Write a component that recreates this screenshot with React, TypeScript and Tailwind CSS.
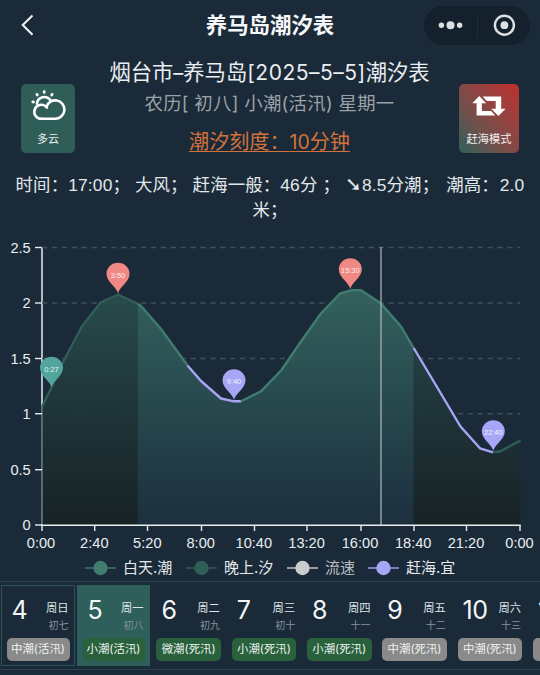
import React from "react";

type Point = [number, number];

const CURVE: Point[] = [
  [42, 407], [51.7, 387], [61.5, 365], [81.5, 327], [100.5, 302.5], [118, 294.5],
  [137.7, 303.8], [141, 306], [161, 329], [187.5, 365.5], [201, 381], [221, 398.5],
  [234, 401.3], [241, 401.3], [261, 391.3], [281.5, 370], [301, 341.5], [320.5, 314],
  [340, 293.5], [351, 290.3], [361, 290.3], [381, 303.5], [401, 326.5], [413.7, 348],
  [437, 387], [460.5, 426.5], [480, 448.3], [493, 452.3], [500, 451.5], [520.5, 440.5],
];

const line = (a: number, b: number) =>
  CURVE.slice(a, b + 1).map((p) => p.join(",")).join(" ");
const area = (a: number, b: number) =>
  `${CURVE[a][0]},525 ${line(a, b)} ${CURVE[b][0]},525`;

const Y_TICKS = [
  { label: "2.5", y: 247.5 },
  { label: "2", y: 303 },
  { label: "1.5", y: 358.5 },
  { label: "1", y: 413.7 },
  { label: "0.5", y: 469.7 },
  { label: "0", y: 525 },
];

const X_TICKS = [
  { label: "0:00", x: 42, tx: 41 },
  { label: "2:40", x: 94.7, tx: 94.3 },
  { label: "5:20", x: 147.5, tx: 147.3 },
  { label: "8:00", x: 201.5, tx: 200.7 },
  { label: "10:40", x: 254.5, tx: 253.8 },
  { label: "13:20", x: 307, tx: 306.6 },
  { label: "16:00", x: 361, tx: 360 },
  { label: "18:40", x: 414, tx: 413.2 },
  { label: "21:20", x: 466.5, tx: 466 },
  { label: "0:00", x: 520, tx: 519.5 },
];

const PINS = [
  { x: 118, y: 274.3, label: "3:50", color: "#f08984" },
  { x: 350.3, y: 269.8, label: "15:30", color: "#f08984" },
  { x: 51.5, y: 368.3, label: "0:27", color: "#52a59c" },
  { x: 234, y: 380.8, label: "9:40", color: "#a7a5f5" },
  { x: 493.3, y: 431.8, label: "22:40", color: "#a7a5f5" },
];

function TideChart() {
  return (
    <svg className="block h-[316px] w-full font-['Liberation_Sans',sans-serif]" viewBox="0 234 540 316">
      <defs>
        <linearGradient id="day" gradientUnits="userSpaceOnUse" x1="0" y1="290" x2="0" y2="525">
          <stop offset="0" stopColor="#376862" />
          <stop offset="0.5" stopColor="#284c50" />
          <stop offset="1" stopColor="#1d303f" />
        </linearGradient>
        <linearGradient id="night" gradientUnits="userSpaceOnUse" x1="0" y1="294" x2="0" y2="525">
          <stop offset="0" stopColor="#2a504e" />
          <stop offset="0.5" stopColor="#1f3639" />
          <stop offset="1" stopColor="#172122" />
        </linearGradient>
      </defs>
      <line x1="42" x2="42" y1="247" y2="525" stroke="#c4ccd2" strokeWidth="1.8" />
      {Y_TICKS.slice(0, 5).map((t) => (
        <line key={t.label} x1="42" x2="520" y1={t.y} y2={t.y} stroke="#3e5158" strokeWidth="1.4" strokeDasharray="5.3 4.6" />
      ))}
      <polygon points={area(0, 6)} fill="url(#night)" fillOpacity="0.85" />
      <polygon points={area(6, 23)} fill="url(#day)" fillOpacity="0.88" />
      <polygon points={area(23, 29)} fill="url(#night)" fillOpacity="0.85" />
      <line x1="42" x2="42" y1="407" y2="525" stroke="#566a6b" strokeWidth="1.8" />
      <g fill="none" strokeWidth="2.4" strokeLinejoin="round">
        <polyline points={line(0, 6)} stroke="#305d58" />
        <polyline points={line(6, 9)} stroke="#417c70" />
        <polyline points={line(9, 13)} stroke="#a7a5f5" />
        <polyline points={line(13, 23)} stroke="#417c70" />
        <polyline points={line(23, 27)} stroke="#a7a5f5" />
        <polyline points={line(27, 29)} stroke="#305d58" />
      </g>
      <line x1="381" x2="381" y1="247" y2="525" stroke="#a6b0b5" strokeWidth="1.3" />
      {PINS.map((p) => (
        <g key={p.label} transform={`translate(${p.x} ${p.y})`}>
          <path d="M0 19C-1.8 12-11.5 7.5-11.5-.6a11.5 11 0 0 1 23 0C11.5 7.5 1.8 12 0 19Z" fill={p.color} />
          <text y="3.2" textAnchor="middle" fontSize="7.4" fill="#fff" fillOpacity="0.9">{p.label}</text>
        </g>
      ))}
      <g stroke="#e8edf0" strokeWidth="1.4">
        {Y_TICKS.map((t) => (
          <line key={t.label} x1="35" x2="42" y1={t.y} y2={t.y} />
        ))}
        <line x1="41" x2="520.7" y1="525.2" y2="525.2" />
        {X_TICKS.map((t) => (
          <line key={t.x} x1={t.x} x2={t.x} y1="525" y2="531" />
        ))}
      </g>
      <g fill="#e9eef1" fontSize="14.6">
        {Y_TICKS.map((t) => (
          <text key={t.label} x="30.7" y={t.y + 5.2} textAnchor="end">{t.label}</text>
        ))}
        {X_TICKS.map((t) => (
          <text key={t.x} x={t.tx} y="547.8" textAnchor="middle">{t.label}</text>
        ))}
      </g>
    </svg>
  );
}

function Legend() {
  const items = [
    { label: "白天.潮", color: "#417c70", text: "text-[#e4eaed]", width: "w-[101px]" },
    { label: "晚上.汐", color: "#305d58", text: "text-[#e4eaed]", width: "w-[101px]" },
    { label: "流速", color: "#cccccc", text: "text-[#b9bdc0]", width: "w-[81px]" },
    { label: "赶海.宜", color: "#a7a5f5", text: "text-[#e4eaed]", width: "w-[101px]" },
  ];
  return (
    <div className="flex h-[31px] items-center pl-[85px] pt-[4px] text-[15px] leading-[20px]">
      {items.map((i) => (
        <div key={i.label} className={`flex shrink-0 items-center gap-[7px] whitespace-nowrap ${i.width}`}>
          <svg className="h-[16px] w-[31px] shrink-0" viewBox="0 0 31 16">
            <path d="M0 8H31" stroke={i.color} strokeWidth="1.4" />
            <circle cx="15.5" cy="8" r="7.2" fill={i.color} />
          </svg>
          <span className={i.text}>{i.label}</span>
        </div>
      ))}
    </div>
  );
}

const DAYS = [
  { n: "4", week: "周日", lunar: "初七", tide: "中潮(活汛)", frame: "border-[#2c5459] mr-[2px] ml-[1px] w-[74px] px-[4.5px]", pill: "bg-[#8a8a8a]" },
  { n: "5", week: "周一", lunar: "初八", tide: "小潮(活汛)", frame: "border-[#2f5f5a] bg-[#2f5f5a] mr-[1px] w-[73px] px-[4.5px]", pill: "bg-[#28613b]" },
  { n: "6", week: "周二", lunar: "初九", tide: "微潮(死汛)", frame: "border-transparent w-[75.3px] px-[4.4px]", pill: "bg-[#28613b]" },
  { n: "7", week: "周三", lunar: "初十", tide: "小潮(死汛)", frame: "border-transparent w-[75.3px] px-[4.4px]", pill: "bg-[#28613b]" },
  { n: "8", week: "周四", lunar: "十一", tide: "小潮(死汛)", frame: "border-transparent w-[75.3px] px-[4.4px]", pill: "bg-[#28613b]" },
  { n: "9", week: "周五", lunar: "十二", tide: "中潮(死汛)", frame: "border-transparent w-[75.3px] px-[4.4px]", pill: "bg-[#8a8a8a]" },
  { n: "10", week: "周六", lunar: "十三", tide: "中潮(死汛)", frame: "border-transparent w-[75.3px] px-[4.4px]", pill: "bg-[#8a8a8a]" },
  { n: "11", week: "", lunar: "", tide: "", frame: "border-transparent w-[75.3px] px-[4.4px]", pill: "bg-[#8a8a8a]" },
];

function DayStrip() {
  return (
    <div className="flex h-[89px] overflow-hidden border-y border-[#2a434d] pt-[3px]">
      {DAYS.map((d) => (
        <div key={d.n} className={`flex h-[81px] shrink-0 flex-col border ${d.frame}`}>
          <div className="flex h-[52px] justify-between pl-[5px] pr-[1px]">
            <span className="pt-[10px] font-['Inter',sans-serif] text-[25px] leading-[29px] tracking-[-0.6px] text-[#f3f6f7]">{d.n}</span>
            <div className="flex flex-col items-end whitespace-nowrap pt-[14px]">
              <span className="text-[11.3px] leading-[17px] text-[#dfe5e8]">{d.week}</span>
              <span className="text-[10px] leading-[16px] text-[#84949a]">{d.lunar}</span>
            </div>
          </div>
          <div className={`flex h-[23px] items-center justify-center whitespace-nowrap rounded-[5px] text-[11.4px] leading-[23px] text-[#eef3f1] ${d.pill}`}>{d.tide}</div>
        </div>
      ))}
    </div>
  );
}

function NavBar() {
  return (
    <header className="flex h-[50px] items-center justify-between">
      <div className="flex w-[116px] pl-[20px]">
        <svg className="h-[24px] w-[16px]" viewBox="0 0 16 24">
          <path d="M12.5 2.5 2.7 12l9.8 9.8" fill="none" stroke="#f2f5f6" strokeWidth="2" />
        </svg>
      </div>
      <h1 className="whitespace-nowrap text-[21.4px] font-bold leading-[30px] text-[#f5f7f8]">养马岛潮汐表</h1>
      <div className="flex w-[116px] pr-[10px]">
        <div className="flex h-[39px] w-[106px] items-center rounded-full bg-[#14212c]">
          <svg className="h-[39px] w-[106px]" viewBox="0 0 106 39" fill="#dce0e3">
            <circle cx="17.4" cy="19.2" r="2.7" />
            <circle cx="26.5" cy="19.2" r="4" />
            <circle cx="35.6" cy="19.2" r="2.7" />
            <path d="M53.5 7v25" stroke="#1c2d38" />
            <circle cx="80.4" cy="19.2" r="9.5" fill="none" stroke="#dce0e3" strokeWidth="2.4" />
            <circle cx="80.4" cy="19.2" r="3.9" />
          </svg>
        </div>
      </div>
    </header>
  );
}

function Summary() {
  return (
    <section className="flex h-[116px] px-[21px]">
      <button className="mt-[34px] flex h-[69px] w-[54px] shrink-0 flex-col items-center rounded-[5px] bg-[#2f5d58] text-[11px] text-[#e7eeed]">
        <svg className="mt-[5px] h-[34px] w-[36px]" viewBox="0 0 36 34" fill="none" stroke="#fff" strokeWidth="2.6" strokeLinecap="round" strokeLinejoin="round">
          <path d="M11.6 29.8H25a9.2 9.2 0 1 0-8.6-11.9" />
          <path d="M11.6 29.8a7 7 0 1 1 4.4-12.2l1 .9" />
          <path d="M7 14.6a7.4 7.4 0 0 1 13.4-3.4" />
          <path d="m2.8 12.9.6.1M6.9 5.4l.4.5M14.2 2.6v.8M22.2 5.3l-.5.7" strokeWidth="2.8" />
        </svg>
        <span className="mt-[8px] leading-[17px]">多云</span>
      </button>
      <div className="flex grow flex-col items-center whitespace-nowrap pl-[5px]">
        <div className="mt-[6px] text-[21.3px] leading-[32px] text-[#e9eef0]">
          烟台市<span className="font-['Inter',sans-serif] text-[20px]">–</span>养马岛<span className="font-['Inter',sans-serif] text-[21px] tracking-[0.5px]">[2025–5–5]</span>潮汐表
        </div>
        <div className="text-[18.4px] leading-[28px] tracking-[0.3px] text-[#9ba3a9]">农历[ 初八] 小潮(活汛) 星期一</div>
        <div className="mt-[10px] text-[20.1px] leading-[30px] text-[#d3723a] underline decoration-1 underline-offset-[2px]">
          潮汐刻度：<span className="font-['Inter',sans-serif] text-[19.5px]">10</span>分钟
        </div>
      </div>
      <button className="mt-[34px] flex h-[69px] w-[60px] shrink-0 flex-col items-center rounded-[5px] bg-[linear-gradient(to_top_right,#2d6058_0%,#70504c_35%,#9c403d_70%,#bd302c_100%)] text-[11.2px] text-[#f0eeee]">
        <svg className="mt-[11px] h-[22px] w-[34px]" viewBox="0 0 34 22" fill="#fff">
          <path d="M7.2 .9 14.2 8.2H9.9v7.7h9.3l4 4.5H4.6V8.2H.3ZM10.6 1.6h18.6v12.2h4.4l-7.2 7.3-7.1-7.3h4.4V6H14.8Z" />
        </svg>
        <span className="mt-[14px] whitespace-nowrap leading-[17px]">赶海模式</span>
      </button>
    </section>
  );
}

export default function App() {
  return (
    <div className="flex h-[675px] w-[540px] flex-col overflow-hidden bg-[#1b2a38] font-['Inter','Noto_Sans_CJK_SC',sans-serif]">
      <NavBar />
      <Summary />
      <div className="flex h-[68px] flex-col items-center whitespace-pre pt-[7px] font-['Liberation_Sans','Noto_Sans_CJK_SC',sans-serif] text-[17.4px] leading-[25px] tracking-[0.15px] text-[#e2e8eb]">
        <div className="h-[25px]">时间：17:00； 大风； 赶海一般：46分 ； <span className="font-['DejaVu_Sans'] text-[20px] font-bold leading-[20px]">➘</span>8.5分潮； <span className="pl-[2px]">潮高：</span><span className="pl-[1px]">2.0</span></div>
        <div>米；</div>
      </div>
      <TideChart />
      <Legend />
      <DayStrip />
    </div>
  );
}
